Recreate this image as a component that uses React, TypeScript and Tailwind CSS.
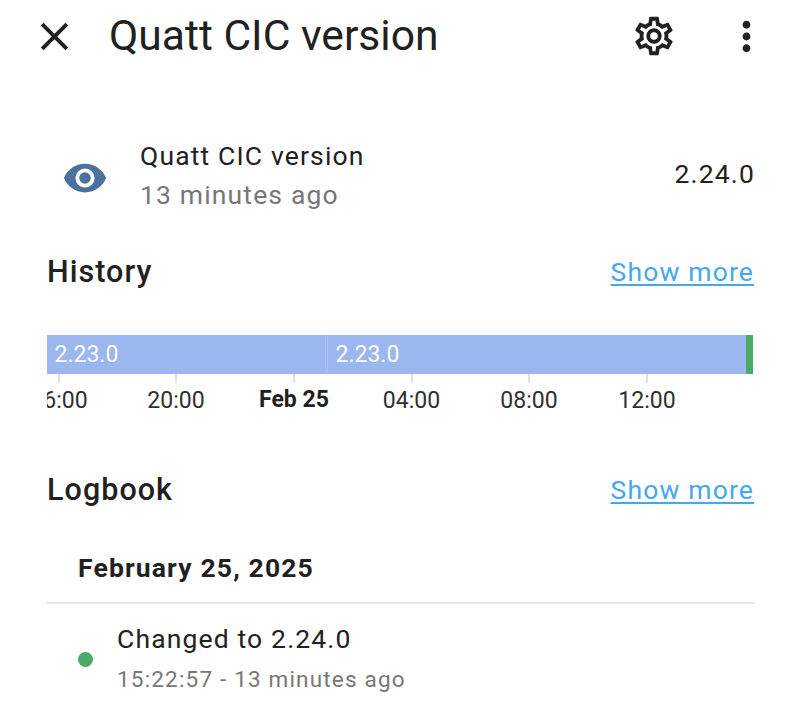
import { MdClose, MdMoreVert } from "react-icons/md";

const ticks = [
  { label: "16:00", x: 59 },
  { label: "20:00", x: 176 },
  { label: "Feb 25", x: 294, bold: true },
  { label: "04:00", x: 411.5 },
  { label: "08:00", x: 529 },
  { label: "12:00", x: 647 }
];

function GearIcon() {
  return (
    <svg viewBox="0 0 24 24" className="size-[46px]" fill="currentColor">
      <path d="M12,8A4,4 0 0,1 16,12A4,4 0 0,1 12,16A4,4 0 0,1 8,12A4,4 0 0,1 12,8M12,10A2,2 0 0,0 10,12A2,2 0 0,0 12,14A2,2 0 0,0 14,12A2,2 0 0,0 12,10M10,22C9.75,22 9.54,21.82 9.5,21.58L9.13,18.93C8.5,18.68 7.96,18.34 7.44,17.94L4.95,18.95C4.73,19.03 4.46,18.95 4.34,18.73L2.34,15.27C2.21,15.05 2.27,14.78 2.46,14.63L4.57,12.97L4.5,12L4.57,11L2.46,9.37C2.27,9.22 2.21,8.95 2.34,8.73L4.34,5.27C4.46,5.05 4.73,4.96 4.95,5.05L7.44,6.05C7.96,5.66 8.5,5.32 9.13,5.07L9.5,2.42C9.54,2.18 9.75,2 10,2H14C14.25,2 14.46,2.18 14.5,2.42L14.87,5.07C15.5,5.32 16.04,5.66 16.56,6.05L19.05,5.05C19.27,4.96 19.54,5.05 19.66,5.27L21.66,8.73C21.79,8.95 21.73,9.22 21.54,9.37L19.43,11L19.5,12L19.43,13L21.54,14.63C21.73,14.78 21.79,15.05 21.66,15.27L19.66,18.73C19.54,18.95 19.27,19.04 19.05,18.95L16.56,17.95C16.04,18.34 15.5,18.68 14.87,18.93L14.5,21.58C14.46,21.82 14.25,22 14,22H10M11.25,4L10.88,6.61C9.68,6.86 8.62,7.5 7.85,8.39L5.44,7.35L4.69,8.65L6.8,10.2C6.4,11.37 6.4,12.64 6.8,13.8L4.68,15.36L5.43,16.66L7.86,15.62C8.63,16.5 9.68,17.14 10.87,17.38L11.24,20H12.76L13.13,17.39C14.32,17.14 15.37,16.5 16.14,15.62L18.57,16.66L19.32,15.36L17.2,13.81C17.6,12.64 17.6,11.37 17.2,10.2L19.31,8.65L18.56,7.35L16.15,8.39C15.38,7.5 14.32,6.86 13.12,6.62L12.75,4H11.25Z" />
    </svg>
  );
}

function EyeIcon() {
  return (
    <svg viewBox="0 0 24 24" className="mt-[3px] size-[46px] text-[#4b719f]" fill="currentColor">
      <path d="M12,9A3,3 0 0,0 9,12A3,3 0 0,0 12,15A3,3 0 0,0 15,12A3,3 0 0,0 12,9M12,17A5,5 0 0,1 7,12A5,5 0 0,1 12,7A5,5 0 0,1 17,12A5,5 0 0,1 12,17M12,4.5C7,4.5 2.73,7.61 1,12C2.73,16.39 7,19.5 12,19.5C17,19.5 21.27,16.39 23,12C21.27,7.61 17,4.5 12,4.5Z" />
    </svg>
  );
}

function SectionHeader({ title }: { title: string }) {
  return (
    <div className="flex h-10 items-center justify-between pr-[46px] pl-[47px]">
      <h2 className="text-[30.5px] font-medium tracking-[1.05px]">{title}</h2>
      <a href="#" className="text-[26.5px] tracking-[1.15px] text-[#45a8ee] underline decoration-2 underline-offset-[3px]">
        Show more
      </a>
    </div>
  );
}

function HistoryChart() {
  return (
    <div className="mt-[43px] ml-[46.5px] w-[706.5px] overflow-hidden">
      <div className="flex h-[39px] items-center bg-[#9bb7f0] text-[23px] text-white">
        <div className="w-[278px] pt-px pl-2">2.23.0</div>
        <div className="h-full w-[3px] border-x border-[#a9c1f2]" />
        <div className="flex-1 pt-px pl-2">2.23.0</div>
        <div className="h-full w-[7px] bg-[#4aab69]" />
      </div>
      <div className="relative h-[39px] text-[23px]">
        {ticks.map((tick) => (
          <div key={tick.label} className="absolute top-0 flex w-24 -translate-x-1/2 flex-col items-center" style={{ left: tick.x - 46.5 }}>
            <div className="h-[9px] w-[2px] bg-[#e0e0e0]" />
            <span className={tick.bold ? "leading-[33px] font-bold" : "leading-[35px] text-[#303030]"}>{tick.label}</span>
          </div>
        ))}
      </div>
    </div>
  );
}

export default function App() {
  return (
    <main className="h-[710px] w-[800px] overflow-hidden bg-white font-['Roboto',sans-serif] text-[#212121]">
      <header className="flex h-[72px] items-center pl-[31px]">
        <MdClose className="size-[47px]" />
        <h1 className="ml-[31px] w-[522px] text-[42.6px]">Quatt CIC version</h1>
        <GearIcon />
        <MdMoreVert className="ml-[46px] size-[47px]" />
      </header>

      <section className="mt-[64px] flex h-[80px] items-center pr-[45px] pl-[62px]">
        <EyeIcon />
        <div className="ml-8 flex-1 pb-[3px] text-[26.5px] leading-[39px] tracking-[1.15px]">
          <div>Quatt CIC version</div>
          <div className="text-[#777777]">13 minutes ago</div>
        </div>
        <div className="pb-[5px] text-[26.5px] tracking-[1.15px]">2.24.0</div>
      </section>

      <section className="mt-9">
        <SectionHeader title="History" />
        <HistoryChart />
      </section>

      <section className="mt-[57px]">
        <SectionHeader title="Logbook" />
        <h3 className="mt-[34px] mr-[45px] ml-[47px] h-[60px] border-b-2 border-[#e7e7e7] pl-[31px] text-[26.5px] leading-[47px] font-bold tracking-[1.15px]">
          February 25, 2025
        </h3>
        <div className="mt-[15px] flex items-center pl-[78px]">
          <div className="size-[15px] rounded-full bg-[#4aab69]" />
          <div className="ml-6">
            <div className="text-[26.5px] leading-10 tracking-[1.15px]">Changed to 2.24.0</div>
            <div className="text-[22.5px] leading-10 tracking-[1.18px] text-[#777777]">15:22:57 - 13 minutes ago</div>
          </div>
        </div>
      </section>
    </main>
  );
}
